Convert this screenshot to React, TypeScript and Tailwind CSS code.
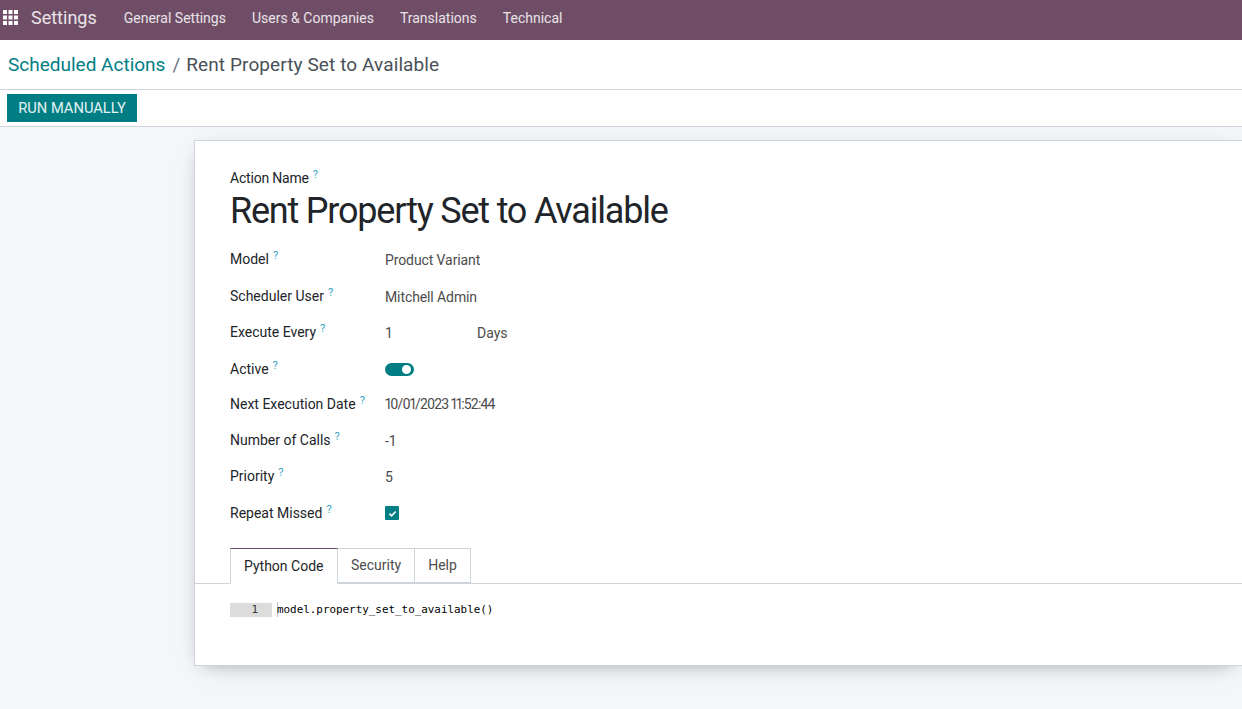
import { Fragment } from "react"

const rows = [
  { label: "Model", value: "Product Variant", h: "h-[37px]" },
  { label: "Scheduler User", value: "Mitchell Admin", h: "h-[36px]" },
  { label: "Execute Every", value: "1", h: "h-[37px]" },
  { label: "Active", value: "toggle", h: "h-[35px] pt-[2px]" },
  { label: "Next Execution Date", value: "10/01/2023 11:52:44", h: "h-[36px]" },
  { label: "Number of Calls", value: "-1", h: "h-[36px]" },
  { label: "Priority", value: "5", h: "h-[37px]" },
  { label: "Repeat Missed", value: "check", h: "h-[36px]" },
]

function Help() {
  return <sup className="ml-[4px] text-[11px] leading-none text-[#31a3c4] relative -top-[5px]">?</sup>
}

function Value({ label, value }: { label: string; value: string }) {
  if (value === "toggle") {
    return (
      <div className="w-[29px] h-[13px] rounded-full bg-[#017e84] flex items-center justify-end pr-[3px]">
        <div className="w-[9px] h-[9px] rounded-full bg-white" />
      </div>
    )
  }
  if (value === "check") {
    return (
      <div className="w-[14px] h-[14px] bg-[#017e84] rounded-[1px] flex items-center justify-center">
        <svg width="9" height="9" viewBox="0 0 10 10" fill="none">
          <path d="M1.5 5.2 L4 7.5 L8.5 2.8" stroke="white" strokeWidth="1.8" />
        </svg>
      </div>
    )
  }
  if (label === "Execute Every") {
    return (
      <div className="flex text-[#4c4c4c] pt-[2px]">
        <span className="w-[92px]">1</span>
        <span>Days</span>
      </div>
    )
  }
  if (label === "Next Execution Date") {
    return <span className="text-[#4c4c4c] proportional-nums tracking-[-0.85px]">{value}</span>
  }
  return <span className="text-[#4c4c4c] pt-[2px] tracking-[-0.1px]">{value}</span>
}

export default function App() {
  return (
    <div className="h-[709px] overflow-hidden bg-[#f5f6fa] font-['Roboto',sans-serif] text-[14px] text-[#212529]">

      {/* NAVBAR */}

      <header className="h-[40px] bg-[#6f4d66] flex items-center text-white/90 pb-[3px]">
        <svg className="ml-[3px] -mt-[2px]" width="15" height="15" viewBox="0 0 15 15" fill="white">
          {[0, 5.5, 11].map((y) => (
            <Fragment key={y}>
              {[0, 5.5, 11].map((x) => (
                <rect key={x} x={x} y={y} width="4" height="4" />
              ))}
            </Fragment>
          ))}
        </svg>
        <span className="ml-[13px] text-[18px] text-white/85 -mt-[2px]">Settings</span>
        <nav className="ml-[27px] flex gap-[26px] text-[14px] text-white/85">
          <span>General Settings</span>
          <span>Users &amp; Companies</span>
          <span>Translations</span>
          <span>Technical</span>
        </nav>
      </header>

      {/* BREADCRUMB */}

      <div className="h-[50px] bg-white border-b border-[#ced4da] flex items-center px-2 text-[19px] pt-[2px]">
        <span className="text-[#017e84]">Scheduled Actions</span>
        <span className="mx-[7px] text-[#6c757d]">/</span>
        <span className="text-[#495057] -ml-px tracking-[0.1px]">Rent Property Set to Available</span>
      </div>

      {/* BUTTONS */}

      <div className="h-[37px] bg-white border-b border-[#ced4da] flex items-center pl-[7px]">
        <button className="h-[28px] w-[130px] bg-[#017e84] text-white/90 text-[14.7px]">RUN MANUALLY</button>
      </div>

      {/* FORM */}

      <div className="ml-[194px] mt-[13px] h-[526px] bg-white border border-[#ced4da] border-r-0 shadow-[0_5px_20px_-10px_rgba(0,0,0,0.5)] pt-[27px]">
        <div className="pl-[35px]">
          <div className="leading-[20px] tracking-[-0.2px]">Action Name<Help /></div>
          <h1 className="text-[36px] leading-[44px] text-[#212529] mb-[8px] pt-[1px] tracking-[-1.2px]">Rent Property Set to Available</h1>

          {rows.map((row) => (
            <div key={row.label} className={`flex items-center ${row.h}`}>
              <div className="w-[155px]">{row.label}<Help /></div>
              <Value label={row.label} value={row.value} />
            </div>
          ))}
        </div>

        {/* TABS */}

        <div className="mt-[17px] h-[36px] border-b border-[#ced4da] pl-[35px] flex">
          <div className="h-[36px] px-[13px] w-[108px] bg-white border border-[#ced4da] border-b-white border-t-[#714b67] flex items-center">Python Code</div>
          <div className="h-[35px] px-[13px] border-y border-r border-[#ced4da] flex items-center text-[#4c4c4c]">Security</div>
          <div className="h-[35px] px-[13px] border-y border-r border-[#ced4da] flex items-center text-[#4c4c4c]">Help</div>
        </div>

        {/* CODE */}

        <div className="pl-[35px] mt-[18px] flex items-center font-['DejaVu_Sans_Mono',monospace] text-[10.9px] leading-[14px] text-black">
          <div className="w-[42px] bg-[#dcdcdc] text-right pr-[14px] text-[#333333]">1</div>
          <div className="ml-[5px] border-l border-[#c0c0c0] -indent-px pt-px">model.property_set_to_available()</div>
        </div>
      </div>
    </div>
  )
}
